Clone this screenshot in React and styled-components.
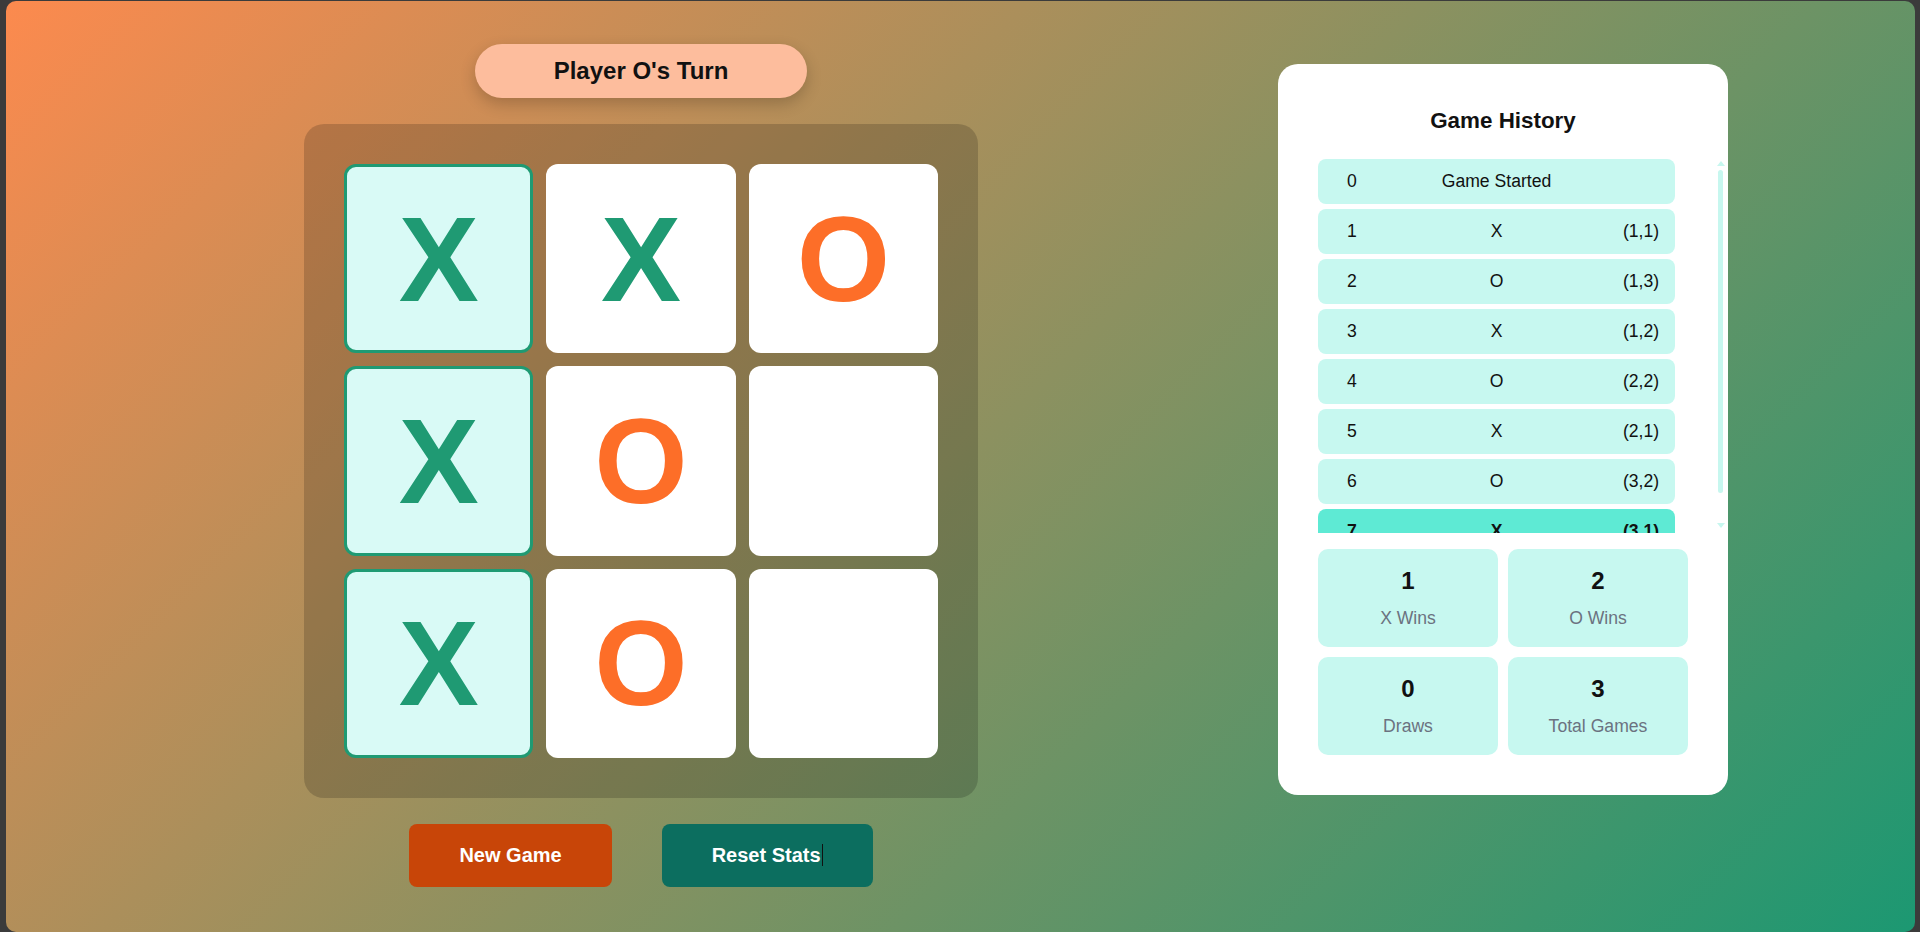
import React from "react";
import styled, { createGlobalStyle } from "styled-components";

const GlobalStyle = createGlobalStyle`
  html, body {
    margin: 0;
    padding: 0;
    background: #3b3b3b;
    overflow: hidden;
  }
  body {
    font-family: "Liberation Sans", Arial, sans-serif;
    color: #111;
  }
  * {
    box-sizing: border-box;
  }
`;

const Page = styled.div`
  margin: 1px 5px 0 6px;
  height: 931px;
  border-radius: 10px;
  background: linear-gradient(135deg, #fc8a4e 0%, #1c9872 100%);
  display: flex;
  align-items: flex-start;
  padding: 43px 0 0 298px;
  gap: 300px;
`;

const GameColumn = styled.div`
  width: 674px;
  display: flex;
  flex-direction: column;
  align-items: center;
  gap: 26px;
`;

const Status = styled.div`
  background: #fdbd9d;
  border-radius: 999px;
  padding: 13px 79px;
  font-size: 24px;
  font-weight: 700;
  color: #111;
  box-shadow: 0 6px 16px rgba(0, 0, 0, 0.2);
`;

const Board = styled.div`
  width: 674px;
  height: 674px;
  padding: 40px;
  border-radius: 20px;
  background: rgba(0, 0, 0, 0.17);
  display: grid;
  grid-template-columns: repeat(3, 1fr);
  grid-template-rows: repeat(3, 1fr);
  gap: 13px;
`;

const Cell = styled.div`
  border-radius: 12px;
  background: ${(p) => (p.$win ? "#d9faf6" : "#ffffff")};
  border: ${(p) => (p.$win ? "3px solid #1f9a73" : "none")};
  display: flex;
  align-items: center;
  justify-content: center;
  font-size: 120px;
  font-weight: 700;
  line-height: 1;
  color: ${(p) => (p.$mark === "X" ? "#1f9a73" : "#fd6e28")};
`;

const Actions = styled.div`
  display: flex;
  gap: 50px;
`;

const Button = styled.button`
  border: none;
  border-radius: 8px;
  padding: 20px 50px;
  font-family: "Liberation Sans", Arial, sans-serif;
  font-size: 20px;
  font-weight: 700;
  line-height: 23px;
  color: #fff;
  background: ${(p) => (p.$variant === "reset" ? "#0c6e5f" : "#c84508")};
  cursor: pointer;
`;

const Caret = styled.span`
  display: inline-block;
  width: 1px;
  height: 22px;
  margin-left: 1px;
  vertical-align: -4px;
  background: #111;
`;

const Panel = styled.div`
  margin-top: 20px;
  width: 450px;
  background: #fff;
  border-radius: 20px;
  padding: 40px;
`;

const Title = styled.h2`
  margin: 4px 0 25px;
  text-align: center;
  font-size: 22.4px;
  font-weight: 700;
`;

const HistoryWrap = styled.div`
  display: flex;
  height: 374px;
  margin: 0 -38px 16px 0;
`;

const HistoryList = styled.div`
  flex: 1;
  overflow: hidden;
  padding-right: 40px;
`;

const ScrollTrack = styled.div`
  width: 11px;
  display: flex;
  flex-direction: column;
  align-items: center;
  padding: 2px 0 5px;
`;

const Arrow = styled.div`
  width: 0;
  height: 0;
  border-left: 4px solid transparent;
  border-right: 4px solid transparent;
  ${(p) =>
    p.$down
      ? "border-top: 5px solid #c7f7ef; margin-top: auto;"
      : "border-bottom: 5px solid #c7f7ef;"}
`;

const Thumb = styled.div`
  width: 5px;
  height: 323px;
  margin-top: 4px;
  border-radius: 3px;
  background: #c7f7ef;
`;

const HistoryRow = styled.div`
  display: grid;
  grid-template-columns: 50px 1fr 50px;
  align-items: center;
  padding: 12px 9px;
  margin-bottom: 5px;
  border-radius: 8px;
  background: ${(p) => (p.$current ? "#5eead4" : "#c7f8f0")};
  font-size: 17.6px;
  line-height: 21px;
  font-weight: ${(p) => (p.$current ? 700 : 400)};
  text-align: center;
`;

const StatsGrid = styled.div`
  display: grid;
  grid-template-columns: 1fr 1fr;
  gap: 10px;
`;

const StatCard = styled.div`
  background: #c7f8f0;
  border-radius: 10px;
  padding: 18px 10px;
  display: flex;
  flex-direction: column;
  align-items: center;
  gap: 13px;
`;

const StatValue = styled.div`
  font-size: 24px;
  font-weight: 700;
  color: #111;
`;

const StatLabel = styled.div`
  font-size: 17.6px;
  color: #6b7280;
`;

const board = [
  { mark: "X", win: true },
  { mark: "X" },
  { mark: "O" },
  { mark: "X", win: true },
  { mark: "O" },
  { mark: "" },
  { mark: "X", win: true },
  { mark: "O" },
  { mark: "" },
];

const history = [
  { n: 0, label: "Game Started" },
  { n: 1, mark: "X", pos: "(1,1)" },
  { n: 2, mark: "O", pos: "(1,3)" },
  { n: 3, mark: "X", pos: "(1,2)" },
  { n: 4, mark: "O", pos: "(2,2)" },
  { n: 5, mark: "X", pos: "(2,1)" },
  { n: 6, mark: "O", pos: "(3,2)" },
  { n: 7, mark: "X", pos: "(3,1)" },
];

const stats = [
  { value: 1, label: "X Wins" },
  { value: 2, label: "O Wins" },
  { value: 0, label: "Draws" },
  { value: 3, label: "Total Games" },
];

export default function App() {
  return (
    <>
      <GlobalStyle />
      <Page>
        <GameColumn>
          <Status>Player O's Turn</Status>
          <Board>
            {board.map((c, i) => (
              <Cell key={i} $mark={c.mark} $win={c.win}>
                {c.mark}
              </Cell>
            ))}
          </Board>
          <Actions>
            <Button>New Game</Button>
            <Button $variant="reset">
              Reset Stats
              <Caret />
            </Button>
          </Actions>
        </GameColumn>

        <Panel>
          <Title>Game History</Title>
          <HistoryWrap>
            <HistoryList>
              {history.map((h, i) => (
                <HistoryRow key={h.n} $current={i === history.length - 1}>
                  <span>{h.n}</span>
                  <span>{h.label || h.mark}</span>
                  <span>{h.pos || ""}</span>
                </HistoryRow>
              ))}
            </HistoryList>
            <ScrollTrack>
              <Arrow />
              <Thumb />
              <Arrow $down />
            </ScrollTrack>
          </HistoryWrap>
          <StatsGrid>
            {stats.map((s) => (
              <StatCard key={s.label}>
                <StatValue>{s.value}</StatValue>
                <StatLabel>{s.label}</StatLabel>
              </StatCard>
            ))}
          </StatsGrid>
        </Panel>
      </Page>
    </>
  );
}
